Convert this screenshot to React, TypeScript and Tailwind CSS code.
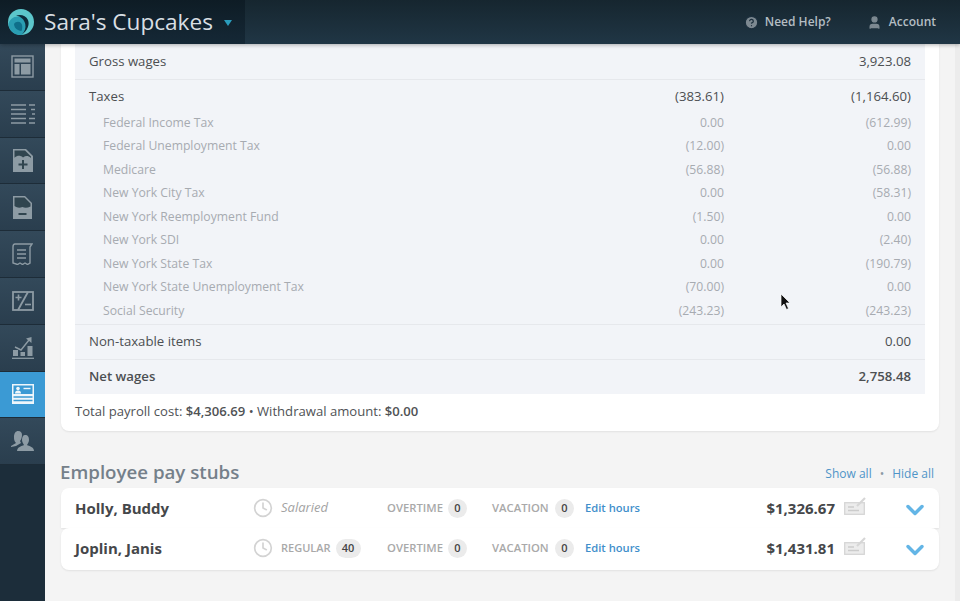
import { ChevronDown, CircleHelp, Clock, User } from "lucide-react";

const font = "font-['Open_Sans','Noto_Sans',sans-serif]";

const taxRows = [
  { label: "Federal Income Tax", current: "0.00", ytd: "(612.99)" },
  { label: "Federal Unemployment Tax", current: "(12.00)", ytd: "0.00" },
  { label: "Medicare", current: "(56.88)", ytd: "(56.88)" },
  { label: "New York City Tax", current: "0.00", ytd: "(58.31)" },
  { label: "New York Reemployment Fund", current: "(1.50)", ytd: "0.00" },
  { label: "New York SDI", current: "0.00", ytd: "(2.40)" },
  { label: "New York State Tax", current: "0.00", ytd: "(190.79)" },
  { label: "New York State Unemployment Tax", current: "(70.00)", ytd: "0.00" },
  { label: "Social Security", current: "(243.23)", ytd: "(243.23)" },
];

function Logo() {
  return (
    <svg width="26" height="26" viewBox="0 0 26 26">
      <circle cx="13" cy="13" r="13" fill="#5cc6cb" />
      <path d="M0.500 16C1 10 6 7 11 7.500c6 .5 9 5 8 10-.6 3.500-3 6-5 8.400C6 26.500 1.500 22 0.500 16Z" fill="#2a9db2" />
      <path d="M8 6.500c5-1.500 10 0 12 4.500 2 5-1 11-6 14.500 2.500-3 4.200-6.500 3.300-10.500C16.300 10.500 13 7.500 8 6.500Z" fill="#0d2b3a" />
      <path d="M6 15c1.500-2.500 5-3 7-1 1.800 2 1.500 5.500.5 8-2-.2-5-1-6.500-3.500-.6-1-.9-2.300-1-3.500Z" fill="#0f6f8a" />
    </svg>
  );
}

const iconColor = "#8d9ba4";
const tileColor = "#30454f";

const navIcons = [
  <svg key="a" width="23" height="23" viewBox="0 0 23 23" fill="none">
    <rect x="1" y="1" width="21" height="21" stroke={iconColor} strokeWidth="1.400" />
    <rect x="3.500" y="3.500" width="16" height="4" fill={iconColor} />
    <rect x="3.500" y="9" width="5" height="10.500" fill={iconColor} />
    <rect x="10" y="9" width="9.500" height="10.500" fill={iconColor} />
  </svg>,
  <svg key="b" width="24" height="22" viewBox="0 0 24 22" stroke={iconColor} strokeWidth="1.300">
    <path d="M0 2h15M0 6.500h15M0 11h15M0 15.500h15M0 20h15" />
    <path d="M18 2h6M20 6.500h4M21 11h3M18 15.500h6M18 20h6" />
  </svg>,
  <svg key="c" width="20" height="23" viewBox="0 0 20 23">
    <path d="M0 0h13l7 7v16H0Z" fill={iconColor} />
    <path d="M1.500 1.500h10.500l6 6v1.500c-3-2.500-5-2.500-8-.6-3-2.200-5.500-2-8.500.3Z" fill={tileColor} />
    <path d="M10 11v9M5.500 15.500h9" stroke={tileColor} strokeWidth="2" />
  </svg>,
  <svg key="d" width="19" height="23" viewBox="0 0 19 23">
    <path d="M0 0h12l7 7v16H0Z" fill={iconColor} />
    <path d="M1.500 1.500h10l6 6v3c-3 1.500-6 1.500-8 .5-3 1-5 1-8-1Z" fill={tileColor} />
    <path d="M5.500 18h8" stroke={tileColor} strokeWidth="2" />
  </svg>,
  <svg key="e" width="21" height="22" viewBox="0 0 21 22" fill="none" stroke={iconColor} strokeWidth="1.400">
    <path d="M3 1h17l-2 3v16l-2.500 1.500L13 20l-2.500 1.500L8 20l-2.500 1.500L1 20V4c0-2 1-3 2-3Z" />
    <path d="M5 7h9M5 11h9M5 15h9" />
  </svg>,
  <svg key="f" width="22" height="20" viewBox="0 0 22 20" fill="none" stroke={iconColor}>
    <rect x="1" y="1" width="20" height="18" strokeWidth="1.800" />
    <path d="M6 19 16 1" strokeWidth="1.800" />
    <path d="M3.500 6.500h6M6.500 3.500v6" strokeWidth="1.600" />
    <path d="M13 13.500h6" strokeWidth="1.600" />
  </svg>,
  <svg key="g" width="22" height="22" viewBox="0 0 22 22">
    <path d="M1 13h5v6H1ZM8.500 15h4.500v4H8.500ZM15.500 9h5v10h-5Z" fill={iconColor} />
    <path d="M0 21.300h22" stroke={iconColor} strokeWidth="1.300" />
    <path d="m3 10 6 3 8-10" fill="none" stroke={iconColor} strokeWidth="1.400" />
    <path d="M14 1.500 19.500 0v6Z" fill={iconColor} />
  </svg>,
  <svg key="h" width="22" height="20" viewBox="0 0 22 20">
    <rect width="22" height="20" fill="#eef6fb" />
    <rect x="1.500" y="1.500" width="19" height="8.500" fill="#3b9ad4" />
    <circle cx="6" cy="4.500" r="1.800" fill="#eef6fb" />
    <path d="M3 9.500c0-2 1-3 3-3s3 1 3 3Z" fill="#eef6fb" />
    <path d="M11.500 4.500h7" stroke="#eef6fb" strokeWidth="1.400" />
    <path d="M1.500 13h19M1.500 16.500h19" stroke="#3b9ad4" strokeWidth="1.300" />
  </svg>,
  <svg key="i" width="23" height="22" viewBox="0 0 23 22" fill={iconColor}>
    <path d="M7 1c3 0 4 2 4 4s-1 5-2 6l1 2-5 3-5 1v-1l5-3c-2-2-2-4-2-6 0-4 2-6 4-6Z" />
    <path d="M14 5c3 0 4 2 4 5 0 2-1 3-2 5 2 1 7 2 7 6H6c0-4 5-5 7-6-1-2-2-3-2-5 0-3 1-5 3-5Z" />
  </svg>,
];

function SummaryRow({ label, ytd, height, bold }: { label: string; ytd: string; height: string; bold?: boolean }) {
  return (
    <div className={`flex items-center border-b border-[#e6e8ec] px-[14px] text-[13.200px] text-[#4c4f52] last:border-b-0 ${height} ${bold ? "font-semibold" : ""}`}>
      <span className="flex-1">{label}</span>
      <span className="w-[187px] text-right">{ytd}</span>
    </div>
  );
}

function Pill({ children, wide }: { children: React.ReactNode; wide?: boolean }) {
  return (
    <span className={`ml-[5px] flex h-[19px] items-center justify-center rounded-full bg-[#ebebeb] text-[11px] font-semibold text-[#444] ${wide ? "w-[25px]" : "w-[19px]"}`}>
      {children}
    </span>
  );
}

function CheckIcon() {
  return (
    <svg width="22" height="19" viewBox="0 0 22 19" fill="none" className="mb-[3px] ml-[9px]">
      <rect x="0.700" y="5.700" width="19.600" height="11.600" fill="#ececec" stroke="#d6d6d6" strokeWidth="1.300" />
      <path d="M4 10h6M4 13.500h11" stroke="#cccccc" strokeWidth="1.300" />
      <path d="m13 9 8-8" stroke="#d6d6d6" strokeWidth="2.200" />
    </svg>
  );
}

function Stub({ name, regular, amount, className }: { name: string; regular?: string; amount: string; className: string }) {
  return (
    <div className={`flex items-center bg-white pl-[14px] pr-[10px] shadow-[0_1px_2px_rgba(0,0,0,0.08)] ${className}`}>
      <span className="w-[178px] text-[15px] font-bold text-[#45474a]">{name}</span>
      <Clock size={20} strokeWidth={2} className="text-[#d3d3d3]" />
      <div className="ml-[8px] flex w-[106px] items-center">
        {regular ? (
          <>
            <span className="text-[11px] font-semibold text-[#a9a9a9]">REGULAR</span>
            <Pill wide>{regular}</Pill>
          </>
        ) : (
          <span className="text-[13px] italic text-[#a3a3a3]">Salaried</span>
        )}
      </div>
      <span className="w-[56px] text-[11.300px] font-semibold text-[#a9a9a9]">OVERTIME</span>
      <Pill>0</Pill>
      <span className="ml-[25px] w-[58px] text-[11.300px] font-semibold text-[#a9a9a9]">VACATION</span>
      <Pill>0</Pill>
      <span className="ml-[11px] text-[11.200px] font-semibold text-[#3f8fcb]">Edit hours</span>
      <span className="ml-auto text-[15px] font-bold text-[#45474a]">{amount}</span>
      <CheckIcon />
      <ChevronDown size={28} strokeWidth={3} className="ml-[35px] mt-[3px] text-[#63b5e6]" />
    </div>
  );
}

export default function App() {
  return (
    <div className={`${font} flex h-[601px] w-[960px] flex-col overflow-hidden bg-[#f4f4f4]`}>
      {/* Top bar */}
      <header className="z-10 flex h-[44px] shrink-0 items-center bg-gradient-to-b from-[#16262f] to-[#203645] shadow-[0_1px_4px_rgba(0,0,0,0.3)]">
        <div className="flex h-full w-[245px] items-center bg-gradient-to-b from-[#0e1c25] to-[#152836] pl-[8px]">
          <Logo />
          <span className="ml-[10px] text-[22.600px] text-[#d9dfe3]">Sara's Cupcakes</span>
          <span className="ml-[11px] mt-[1px] border-x-[4px] border-t-[6px] border-x-transparent border-t-[#2a9dbd]" />
        </div>
        <div className="ml-auto flex items-center text-[12px] font-semibold text-[#b4bdc3]">
          <CircleHelp size={15} fill="#7d8991" stroke="#1c2f3d" />
          <span className="ml-[6px]">Need Help?</span>
          <User size={15} fill="#7d8991" stroke="#7d8991" className="ml-[36px]" />
          <span className="ml-[7px] mr-[24px]">Account</span>
        </div>
      </header>

      <div className="flex min-h-0 flex-1">
        {/* Icon rail */}
        <nav className="flex w-[45px] shrink-0 flex-col bg-[#1c2d3a]">
          {navIcons.map((icon, i) => (
            <div
              key={i}
              className={`flex h-[46.800px] shrink-0 items-center justify-center border-b border-[#1d2c38] ${
                i === 7 ? "bg-[#3b9ad4]" : "bg-gradient-to-b from-[#33495a] to-[#2a3e4e]"
              }`}
            >
              {icon}
            </div>
          ))}
        </nav>

        <main className="relative min-w-0 flex-1 border-r-[5px] border-[#ececec] pl-[16px] pr-[16px]">
          {/* Payroll summary */}
          <section className="rounded-b-[8px] bg-white px-[14px] pb-[10px] shadow-[0_1px_2px_rgba(0,0,0,0.08)]">
            <div className="bg-[#f2f4f8]">
              <SummaryRow label="Gross wages" ytd="3,923.08" height="h-[36px]" />
              <div className="border-b border-[#e6e8ec] pb-[1px]">
                <div className="flex h-[31px] items-center px-[14px] pt-[2px] text-[13.200px] text-[#4c4f52]">
                  <span className="flex-1">Taxes</span>
                  <span className="w-[100px] text-right">(383.61)</span>
                  <span className="w-[187px] text-right">(1,164.60)</span>
                </div>
                {taxRows.map((row) => (
                  <div key={row.label} className="flex h-[23.500px] items-center pl-[28px] pr-[14px] text-[12.200px] text-[#a7abb1]">
                    <span className="flex-1">{row.label}</span>
                    <span className="w-[100px] text-right">{row.current}</span>
                    <span className="w-[187px] text-right">{row.ytd}</span>
                  </div>
                ))}
              </div>
              <SummaryRow label="Non-taxable items" ytd="0.00" height="h-[35px]" />
              <SummaryRow label="Net wages" ytd="2,758.48" height="h-[34px]" bold />
            </div>
            <p className="mt-[8px] text-[13.100px] text-[#4f5255]">
              Total payroll cost: <b className="font-semibold">$4,306.69</b> • Withdrawal amount: <b className="font-semibold">$0.00</b>
            </p>
          </section>

          {/* Pay stubs */}
          <div className="mt-[28px] flex h-[29px] items-start justify-between pr-[5px]">
            <h2 className="ml-[-1px] text-[18.700px] font-semibold leading-[26px] text-[#75808a]">Employee pay stubs</h2>
            <div className="mt-[6px] text-[12px] text-[#4f94c8]">
              Show all<span className="mx-[8px] text-[#8d9aa5]">•</span>Hide all
            </div>
          </div>
          <Stub name="Holly, Buddy" amount="$1,326.67" className="h-[40px] rounded-t-[8px]" />
          <Stub name="Joplin, Janis" regular="40" amount="$1,431.81" className="h-[42px] rounded-[8px] pb-[2px]" />

          {/* Mouse pointer from the recording */}
          <svg width="11" height="18" viewBox="0 0 11 18" className="absolute left-[735px] top-[249px]">
            <path d="M1 1v13l3-3 2.500 5.500 2-1L6 10h4Z" fill="#111" stroke="#fff" strokeWidth="0.700" />
          </svg>
        </main>
      </div>
    </div>
  );
}
